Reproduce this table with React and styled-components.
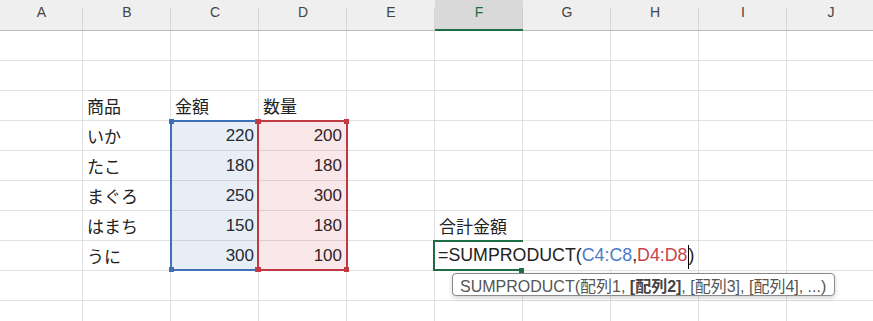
import React from "react";
import styled, { createGlobalStyle, css } from "styled-components";

const GlobalStyle = createGlobalStyle`
  html, body {
    margin: 0;
    padding: 0;
    background: #ffffff;
    overflow: hidden;
  }
  body {
    font-family: "Liberation Sans", "Noto Sans CJK JP", sans-serif;
  }
`;

const GRID_LINE = "#e1e1e1";
const GREEN = "#1f6e43";
const BLUE = "#3f6fb8";
const RED = "#c03a44";
const ROW_HEIGHT = 30;

const Sheet = styled.div`
  display: grid;
  grid-template-columns: 83px repeat(9, 88px);
  grid-template-rows: 31px;
  grid-auto-rows: ${ROW_HEIGHT}px;
  width: 873px;
  height: 321px;
  overflow: hidden;
  font-family: "Liberation Sans", "Noto Sans CJK JP", sans-serif;
`;

const ColumnHeader = styled.div`
  position: relative;
  box-sizing: border-box;
  display: flex;
  justify-content: center;
  align-items: flex-start;
  padding-top: 5px;
  font-size: 14px;
  line-height: 14px;
  color: #444;
  background: #efefef;
  border-bottom: 1px solid #bcbcbc;

  &::after {
    content: "";
    position: absolute;
    right: 0;
    top: 8px;
    bottom: 0;
    width: 1px;
    background: #d6d6d6;
  }

  ${(p) =>
    p.$active &&
    css`
      background: #d9d9d9;
      color: ${GREEN};
      border-bottom: 2px solid ${GREEN};
      &::after {
        background: #cbcbcb;
      }
    `}
`;

const Cell = styled.div`
  position: relative;
  box-sizing: border-box;
  display: flex;
  align-items: center;
  justify-content: ${(p) => (p.$number ? "flex-end" : "flex-start")};
  padding: 0 4px;
  border-right: 1px solid ${GRID_LINE};
  border-bottom: 1px solid ${GRID_LINE};
  font-size: 17px;
  color: #222;
  white-space: nowrap;
`;

/* Coloured reference range, anchored to its top-left cell */
const RangeBox = styled.div`
  position: absolute;
  z-index: ${(p) => p.$layer};
  box-sizing: border-box;
  top: -1px;
  left: ${(p) => p.$offset}px;
  width: ${(p) => p.$width}px;
  height: ${(p) => p.$span * ROW_HEIGHT + 1}px;
  border: 2px solid ${(p) => p.$color};
  background: ${(p) => p.$fill};
  pointer-events: none;
`;

const Handle = styled.span`
  position: absolute;
  width: 5px;
  height: 5px;
  background: ${(p) => p.$color};
  ${(p) => (p.$v === "top" ? "top: -3px;" : "bottom: -3px;")}
  ${(p) => (p.$h === "left" ? "left: -3px;" : "right: -3px;")}
`;

/* In-cell editor that spills over the neighbouring cells */
const Editor = styled.div`
  position: absolute;
  z-index: 3;
  top: 1px;
  left: 0;
  height: 27px;
  display: flex;
  align-items: center;
  padding: 0 4px 0 3px;
  background: #ffffff;
  font-family: "Liberation Sans", sans-serif;
  font-size: 17.8px;
  color: #222;
  white-space: nowrap;
`;

const Ref = styled.span`
  color: ${(p) => p.$color};
`;

const Caret = styled.span`
  display: inline-block;
  width: 1px;
  height: 24px;
  background: #000;
  transform: translateY(1px);
`;

const ActiveFrame = styled.div`
  position: absolute;
  z-index: 4;
  box-sizing: border-box;
  top: -1px;
  left: -2px;
  width: 90px;
  height: 31px;
  border: 2px solid ${GREEN};
  border-right: none;
  pointer-events: none;
`;

const FillHandle = styled.span`
  position: absolute;
  right: -1px;
  bottom: -4px;
  width: 5px;
  height: 5px;
  background: ${GREEN};
`;

const Tooltip = styled.div`
  position: absolute;
  z-index: 5;
  top: 32px;
  left: 17px;
  height: 23px;
  box-sizing: border-box;
  display: flex;
  align-items: center;
  padding: 0 8px 0 7px;
  background: #ffffff;
  border: 1px solid #8a8a8a;
  border-radius: 4px;
  box-shadow: 0 2px 5px rgba(0, 0, 0, 0.18);
  font-family: "Liberation Sans", "Noto Sans CJK JP", sans-serif;
  font-size: 16px;
  color: #555;
  white-space: nowrap;
`;

const Strong = styled.b`
  font-weight: 700;
  color: #444;
`;

const columns = ["A", "B", "C", "D", "E", "F", "G", "H", "I", "J"];

const rows = [
  {},
  {},
  { B: "商品", C: "金額", D: "数量" },
  { B: "いか", C: 220, D: 200 },
  { B: "たこ", C: 180, D: 180 },
  { B: "まぐろ", C: 250, D: 300 },
  { B: "はまち", C: 150, D: 180, F: "合計金額" },
  { B: "うに", C: 300, D: 100 },
  {},
  {},
];

function Range({ offset, width, span, color, fill, layer }) {
  return (
    <RangeBox $offset={offset} $width={width} $span={span} $color={color} $fill={fill} $layer={layer}>
      <Handle $v="top" $h="left" $color={color} />
      <Handle $v="top" $h="right" $color={color} />
      <Handle $v="bottom" $h="left" $color={color} />
      <Handle $v="bottom" $h="right" $color={color} />
    </RangeBox>
  );
}

function FormulaEditor() {
  return (
    <>
      <Editor>
        =SUMPRODUCT(<Ref $color="#4a7bc6">C4:C8</Ref>,<Ref $color="#c8434c">D4:D8</Ref>
        <Caret />)
      </Editor>
      <ActiveFrame>
        <FillHandle />
      </ActiveFrame>
      <Tooltip>
        SUMPRODUCT(配列1,&nbsp;<Strong>[配列2]</Strong>, [配列3], [配列4], ...)
      </Tooltip>
    </>
  );
}

/* Overlays attached to particular cells (address → content) */
const overlays = {
  C4: <Range offset={-1} width={89} span={5} color={BLUE} fill="rgba(64, 112, 184, 0.12)" layer={1} />,
  D4: <Range offset={-2} width={91} span={5} color={RED} fill="rgba(205, 60, 70, 0.12)" layer={2} />,
  F8: <FormulaEditor />,
};

export default function App() {
  return (
    <>
      <GlobalStyle />
      <Sheet>
        {columns.map((c) => (
          <ColumnHeader key={c} $active={c === "F"}>
            {c}
          </ColumnHeader>
        ))}
        {rows.map((row, r) =>
          columns.map((c) => {
            const v = row[c];
            const address = `${c}${r + 1}`;
            return (
              <Cell key={address} $number={typeof v === "number"}>
                {v}
                {overlays[address]}
              </Cell>
            );
          })
        )}
      </Sheet>
    </>
  );
}
